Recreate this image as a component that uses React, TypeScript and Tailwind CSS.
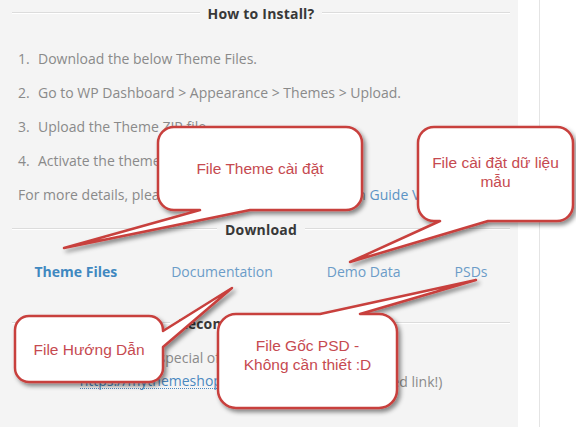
type Pt = [number, number];

type Tail = { side: "top" | "right" | "bottom"; a: number; b: number; tip: Pt };

function bubblePath(x: number, y: number, w: number, h: number, r: number, t: Tail) {
  const tip = `${t.tip[0]} ${t.tip[1]}`;
  let d = `M ${x + r} ${y}`;
  if (t.side === "top") d += ` H ${t.a} L ${tip} L ${t.b} ${y}`;
  d += ` H ${x + w - r} A ${r} ${r} 0 0 1 ${x + w} ${y + r}`;
  if (t.side === "right") d += ` V ${t.a} L ${tip} L ${x + w} ${t.b}`;
  d += ` V ${y + h - r} A ${r} ${r} 0 0 1 ${x + w - r} ${y + h}`;
  if (t.side === "bottom") d += ` H ${t.b} L ${tip} L ${t.a} ${y + h}`;
  d += ` H ${x + r} A ${r} ${r} 0 0 1 ${x} ${y + h - r} V ${y + r} A ${r} ${r} 0 0 1 ${x + r} ${y} Z`;
  return d;
}

const bubbles = [
  { x: 158, y: 127, w: 204, h: 83, r: 16, tail: { side: "bottom", a: 200, b: 250, tip: [64, 248] }, lines: ["File Theme cài đặt"], pad: "justify-center" },
  { x: 418, y: 127, w: 155, h: 94, r: 16, tail: { side: "bottom", a: 440, b: 488, tip: [350, 262] }, lines: ["File cài đặt dữ liệu", "mẫu"], pad: "justify-start pt-[26px]" },
  { x: 15, y: 316, w: 148, h: 66, r: 14, tail: { side: "right", a: 331, b: 347, tip: [232, 288] }, lines: ["File Hướng Dẫn"], pad: "justify-center" },
  { x: 218, y: 314, w: 179, h: 94, r: 18, tail: { side: "top", a: 320, b: 360, tip: [476, 280] }, lines: ["File Gốc PSD -", "Không cần thiết :D"], pad: "justify-center pb-[12px]" },
] as const;

function Heading({ children }: { children: string }) {
  return (
    <div className="flex items-center h-[26px]">
      <div className="flex-1 h-[2px] border-t border-[#dcdcdc] border-b border-b-white" />
      <span className="px-[8px] text-[14px] font-bold text-[#383838] tracking-[0.2px]">{children}</span>
      <div className="flex-1 h-[2px] border-t border-[#dcdcdc] border-b border-b-white" />
    </div>
  );
}

function Step({ n, children }: { n: number; children: React.ReactNode }) {
  return (
    <div className="flex items-center h-[34px] pl-[6px]">
      <span className="w-[20px]">{n}.</span>
      <span>{children}</span>
    </div>
  );
}

export default function App() {
  return (
    <div className="relative w-[576px] h-[427px] overflow-hidden bg-white flex" style={{ fontFamily: "'Open Sans', 'Liberation Sans', sans-serif" }}>
      <div className="w-[518px] h-full bg-[#f4f4f4] pl-[12px] pr-[8px] text-[14px] text-[#8a8a8a]">
        <Heading>How to Install?</Heading>
        <div className="mt-[15px]">
          <Step n={1}>Download the below Theme Files.</Step>
          <Step n={2}>Go to WP Dashboard &gt; Appearance &gt; Themes &gt; Upload.</Step>
          <Step n={3}>Upload the Theme ZIP file.</Step>
          <Step n={4}>Activate the theme.</Step>
          <div className="flex items-center h-[34px] pl-[6px]">
            For more details, please check our Theme Installation&nbsp;<span className="text-[#5b93c4]">Guide Video.</span>
          </div>
        </div>
        <div className="mt-[5px]">
          <Heading>Download</Heading>
        </div>
        <div className="mt-[17px] h-[24px] flex items-center justify-center gap-[54px] text-[#6b9cc8]">
          <span className="font-bold text-[#3f88c0]">Theme Files</span>
          <span>Documentation</span>
          <span>Demo Data</span>
          <span>PSDs</span>
        </div>
        <div className="mt-[27px]">
          <Heading>Recommended Hosting</Heading>
        </div>
        <div className="mt-[11px] h-[20px] flex items-center justify-center">A special offer for our theme users:</div>
        <div className="mt-[4px] h-[20px] flex items-center justify-center">
          <span className="text-[#4a88c0] border-b border-dotted border-[#4a88c0] leading-[15px]">https://mythemeshop.com/go/hostgator</span>
          &nbsp;(affiliated link!)
        </div>
      </div>
      <div className="w-[21px]" />
      <div className="w-px h-full bg-[#e4e4e4]" />

      <svg className="absolute inset-0" width={576} height={427} viewBox="0 0 576 427">
        <defs>
          <filter id="sh" x="-20%" y="-20%" width="140%" height="150%">
            <feDropShadow dx="2.5" dy="3" stdDeviation="2" floodColor="#000" floodOpacity="0.45" />
          </filter>
        </defs>
        {bubbles.map((b, i) => (
          <path
            key={i}
            d={bubblePath(b.x, b.y, b.w, b.h, b.r, b.tail as Tail)}
            fill="#ffffff"
            stroke="#c8403e"
            strokeWidth={2.5}
            strokeLinejoin="round"
            filter="url(#sh)"
          />
        ))}
      </svg>
      {bubbles.map((b, i) => (
        <div
          key={i}
          className={`absolute flex flex-col items-center text-[15.5px] leading-[19px] text-[#c64a50] ${b.pad}`}
          style={{ left: b.x, top: b.y, width: b.w, height: b.h, fontFamily: "'Liberation Sans', Arial, sans-serif" }}
        >
          {b.lines.map((l) => (
            <div key={l}>{l}</div>
          ))}
        </div>
      ))}
    </div>
  );
}
